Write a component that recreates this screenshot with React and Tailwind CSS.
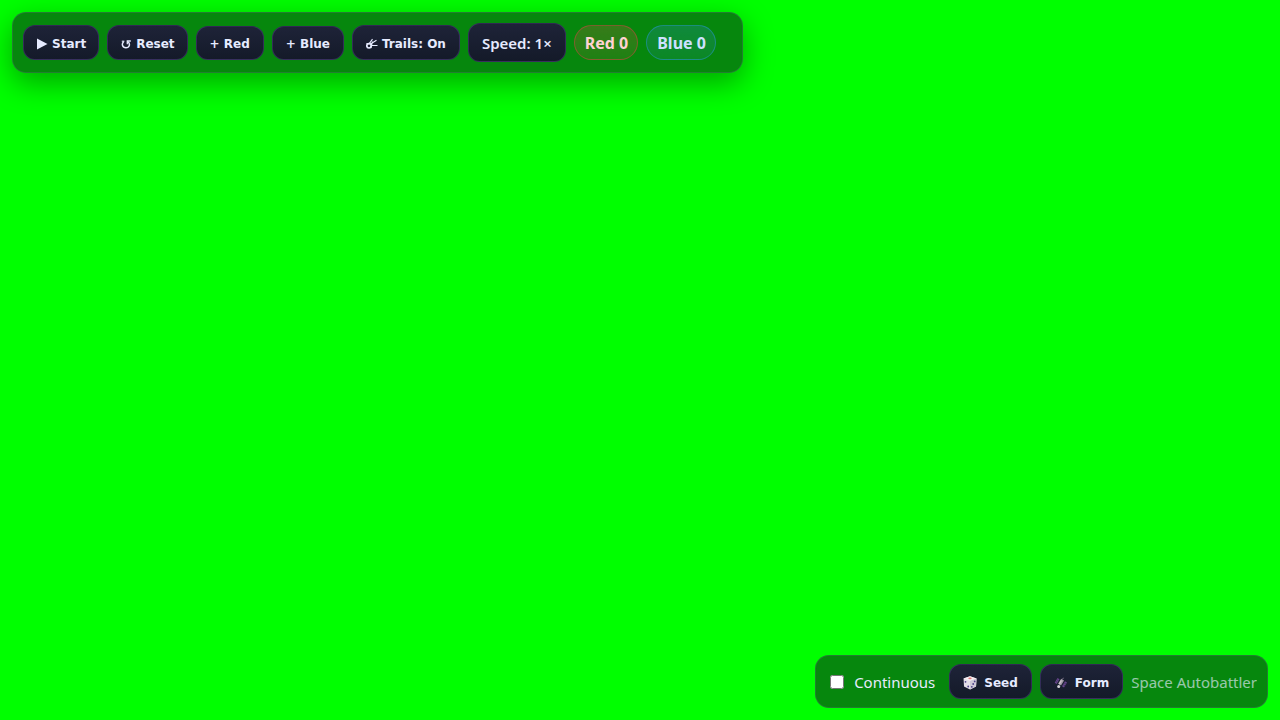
import React, { useState } from "react";

const buttonStyle =
  "flex shrink-0 items-center rounded-xl border border-[#a064ff]/20 bg-linear-to-b from-[#1e2338] to-[#141a29] pt-0.5 font-['DejaVu_Sans',sans-serif] text-[12px] leading-4 font-bold text-[#e6ebff] whitespace-nowrap cursor-pointer";

const panelStyle = "flex items-center gap-2 rounded-[14px] border border-[#7864a0]/25 bg-[#0c101a]/50 pl-2.5";

const pillStyle = "flex h-[35px] shrink-0 items-center rounded-full border pr-[9px] pl-2.5 pt-0.5 text-[16px] font-bold whitespace-nowrap bg-linear-to-b";

function Button({ className, icon, children, onClick }) {
  return (
    <button type="button" onClick={onClick} className={`${buttonStyle} ${className}`}>
      {icon}
      {children}
    </button>
  );
}

function PlayIcon() {
  return (
    <svg className="mr-1 h-3 w-[11px] shrink-0" viewBox="0 0 11 12" aria-hidden="true">
      <path d="M0 .5 10.500 6 0 11.500Z" fill="currentColor" />
    </svg>
  );
}

function ResetIcon() {
  return (
    <svg className="mr-1 h-3 w-[11px] shrink-0" viewBox="0 0 11 12" fill="none" stroke="currentColor" aria-hidden="true">
      <path d="M2.700 3.400C.2 6 1.400 9.800 4.900 9.800c3.600 0 4.600-3.800 2.100-6" strokeWidth="1.500" />
      <path d="M.8 3.200h2.600" strokeWidth="1.100" />
      <path d="M6.300 6.300V3H9.800" strokeWidth="1.300" />
    </svg>
  );
}

function CometIcon() {
  return (
    <svg className="mr-1 h-3 w-3 shrink-0" viewBox="0 0 12 12" fill="none" stroke="currentColor" strokeWidth="1.100" aria-hidden="true">
      <circle cx="3" cy="7.800" r="2.200" strokeWidth="1.700" />
      <path d="M.5 5.600H3.200L6.500 1.200M4.500 6 10.500 2.200M5 7.500H11.500M4.800 10 6.500 3.500" />
    </svg>
  );
}

function DieIcon() {
  return (
    <svg className="mr-1.5 h-4 w-[15px] shrink-0" viewBox="0 0 15 16" aria-hidden="true">
      <path d="M7 1.200 13.500 3.500 13 11.500 7 14.500 1 11.500.5 3.500Z" fill="#e3dee8" />
      <path d="M7 1.200 13.500 3.500 7 6 .5 3.500Z" fill="#f4edf0" />
      <path d="M7 6 13.500 3.500 13 11.500 7 14.500Z" fill="#cdc7d6" />
      <ellipse cx="7" cy="3.300" rx="1.700" ry=".9" fill="#de7777" />
      <g fill="#4b3f86">
        <circle cx="2.500" cy="6.800" r=".9" />
        <circle cx="5.200" cy="11.500" r=".9" />
        <circle cx="8.800" cy="11.800" r=".9" />
        <circle cx="10.200" cy="9" r=".9" />
        <circle cx="11.700" cy="6.400" r=".9" />
      </g>
    </svg>
  );
}

function SatelliteIcon() {
  return (
    <svg className="mr-1.5 h-4 w-[15px] shrink-0" viewBox="0 0 15 16" aria-hidden="true">
      <path d="m3.500 3 2 1.200L2.700 9l-2-1.200ZM11 6.300l2 1.200-3 5-2-1.200Z" fill="#65458b" />
      <path d="m2.700 4.600 2 1.200M1.700 6.300l2 1.200M10.200 8l2 1.200M9.200 9.700l2 1.200" stroke="#382b55" strokeWidth=".7" />
      <path d="m7.200 3.700 2.800 1.700-3 5-2.800-1.700Z" fill="#a39ca8" />
      <path d="m6.800 5 1.200.7-2.200 3.700-1.200-.7Z" fill="#c9c2c8" />
      <circle cx="4.700" cy="11.600" r="1.500" fill="#d5d1d9" />
      <path d="m8.500 4.300.9-1.500" stroke="#81778d" />
    </svg>
  );
}

export default function App() {
  const [running, setRunning] = useState(false);
  const [trails, setTrails] = useState(true);
  const [speed, setSpeed] = useState(1);
  const [red, setRed] = useState(0);
  const [blue, setBlue] = useState(0);

  function reset() {
    setRunning(false);
    setRed(0);
    setBlue(0);
  }

  return (
    <main className="flex min-h-screen flex-col justify-between bg-[#00ff00] p-3 font-['Noto_Sans',sans-serif] text-[15px] leading-[21px] text-[#e6ebff]">
      <header className={`${panelStyle} self-start py-2.5 pr-[26px] shadow-[0_10px_30px_rgba(0,0,0,0.35)]`}>
        <Button className="h-[35px] pr-3 pl-[13px]" icon={<PlayIcon />} onClick={() => setRunning(!running)}>
          {running ? "Pause" : "Start"}
        </Button>
        <Button className="h-[35px] pr-3 pl-[13px]" icon={<ResetIcon />} onClick={reset}>Reset</Button>
        <Button className="h-[34px] px-[13px]" onClick={() => setRed(red + 1)}>+ Red</Button>
        <Button className="h-[34px] px-[13px]" onClick={() => setBlue(blue + 1)}>+ Blue</Button>
        <Button className="h-[35px] px-[13px]" icon={<CometIcon />} onClick={() => setTrails(!trails)}>
          Trails: {trails ? "On" : "Off"}
        </Button>
        <button
          type="button"
          onClick={() => setSpeed(speed === 4 ? 1 : speed * 2)}
          className="h-[39px] shrink-0 cursor-pointer rounded-xl border border-[#a064ff]/20 bg-linear-to-b from-[#1e2338] to-[#141a29] px-[13px] pt-0.5 font-semibold whitespace-nowrap"
        >
          Speed: {speed}×
        </button>
        <span className={`${pillStyle} border-[#ff3250]/40 from-[#ff5050]/20 to-[#ff5050]/10 text-[#ffd2d2]`}>
          Red {red}
        </span>
        <span className={`${pillStyle} border-[#3296ff]/40 from-[#3c96ff]/20 to-[#3c96ff]/10 text-[#cde1ff]`}>
          Blue {blue}
        </span>
      </header>
      <footer className={`${panelStyle} self-end py-2 pr-2.5`}>
        <label className="flex items-center gap-2.5 pr-1.5 pl-1">
          <input type="checkbox" className="h-[14px] w-[14px]" />
          <span className="pt-0.5">Continuous</span>
        </label>
        <Button className="h-[35px] px-[13px]" icon={<DieIcon />}>Seed</Button>
        <Button className="h-[35px] px-[13px]" icon={<SatelliteIcon />}>Form</Button>
        <span className="pt-0.5 opacity-65">Space Autobattler</span>
      </footer>
    </main>
  );
}
